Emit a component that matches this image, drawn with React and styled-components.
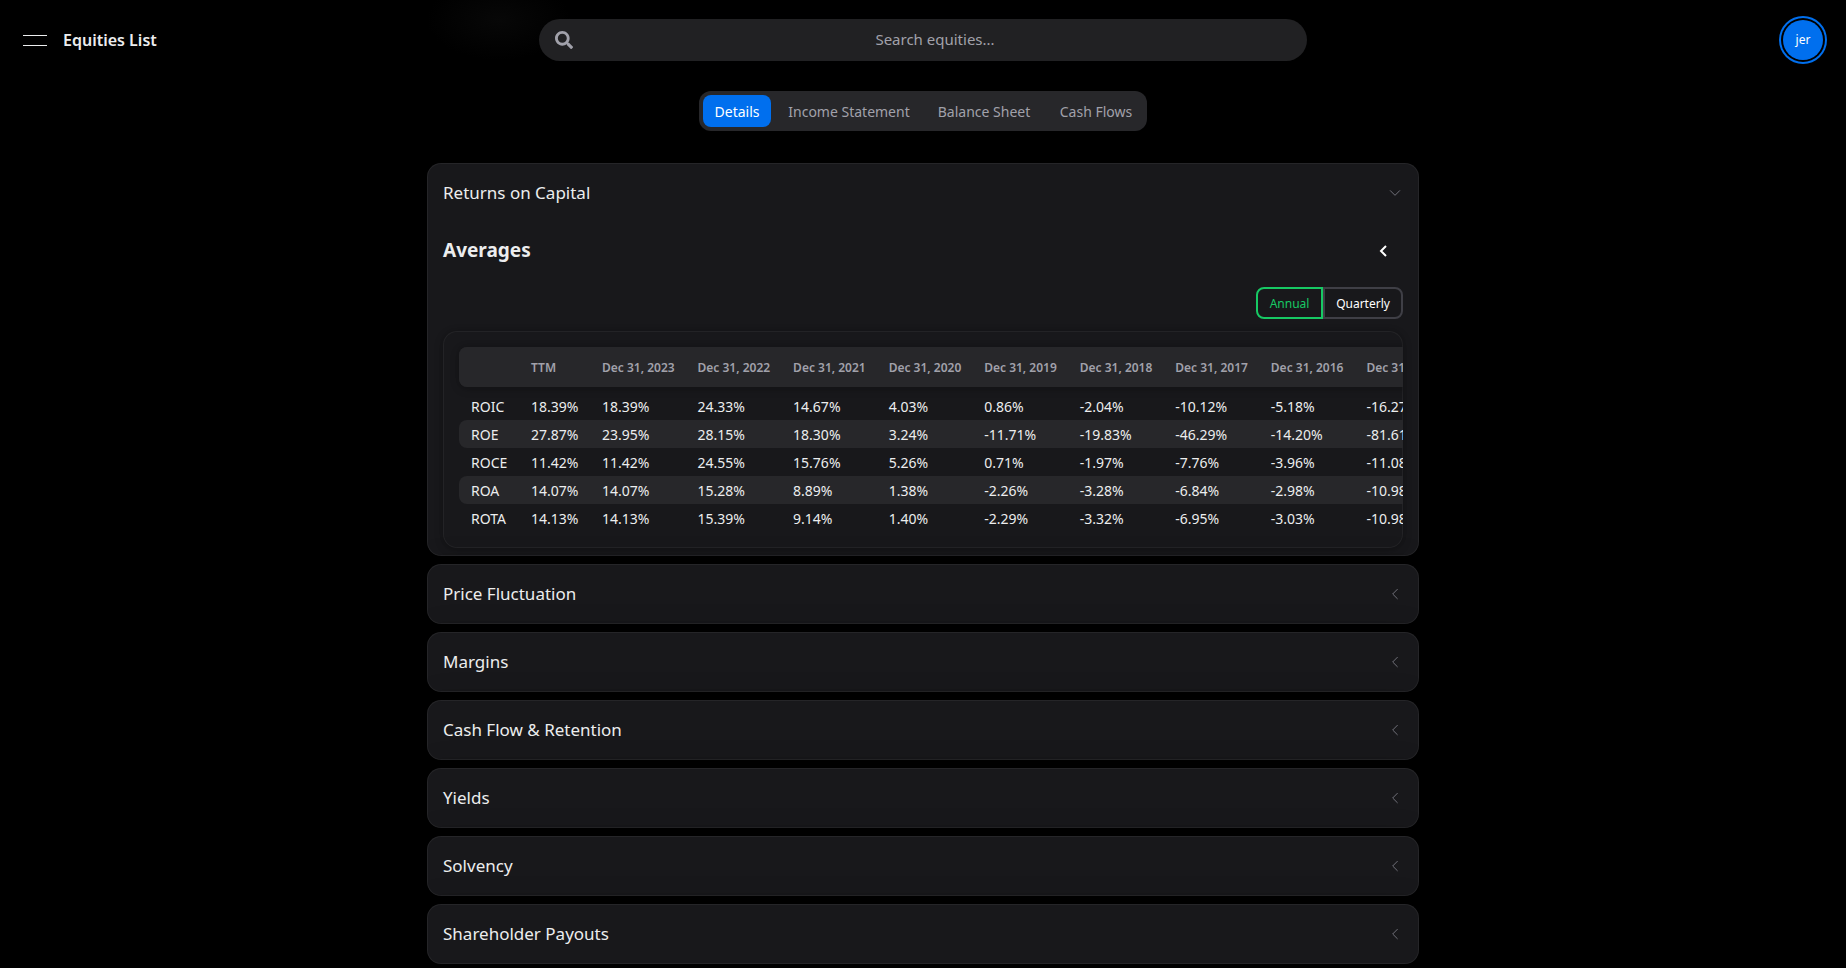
import React, { useState } from 'react';
import styled, { createGlobalStyle } from 'styled-components';
import { FaSearch } from 'react-icons/fa';

const Colors = {
  black: '#000',
  white: '#fff',
  text: '#ecedee',
  muted: '#a1a1aa',
  icon: '#71717a',
  card: '#18181b',
  raised: '#27272a',
  search: '#212123',
  line: '#3f3f46',
  blue: '#006fee',
  green: '#17c964',
};

const Shadows = {
  small: '0 0 5px rgba(0, 0, 0, .05), 0 2px 10px rgba(0, 0, 0, .2), inset 0 0 0 1px rgba(255, 255, 255, .05)',
  medium: '0 0 15px rgba(0, 0, 0, .06), 0 2px 30px rgba(0, 0, 0, .22), inset 0 0 0 1px rgba(255, 255, 255, .06)',
};

const GlobalStyle = createGlobalStyle`
  * {
    box-sizing: border-box;
  }
  body {
    margin: 0;
    background: ${Colors.black};
    color: ${Colors.text};
    font-family: "Noto Sans", "Open Sans", sans-serif;
    font-size: 14px;
    line-height: 20px;
  }
  button, input {
    font: inherit;
    color: inherit;
    border: 0;
    margin: 0;
    padding: 0;
    background: none;
  }
  button {
    cursor: pointer;
  }
`;

const Header = styled.header`
  display: grid;
  grid-template-columns: 1fr minmax(0, 768px) 1fr;
  align-items: center;
  height: 80px;
  padding: 0 23px;
  background: radial-gradient(ellipse 72px 40px at calc(50% - 424px) 20px, #070707, transparent);
`;

const Brand = styled.div`
  display: flex;
  align-items: center;
  gap: 16px;
`;

const MenuButton = styled.button`
  display: flex;
  flex-direction: column;
  justify-content: center;
  gap: 9px;
  width: 24px;
  height: 40px;
`;

const MenuLine = styled.span`
  height: 1px;
  background: ${Colors.text};
`;

const BrandLink = styled.a`
  color: inherit;
  font-size: 16px;
  font-weight: 600;
  text-decoration: none;
  white-space: nowrap;
`;

const SearchBar = styled.label`
  display: flex;
  align-items: center;
  gap: 6px;
  height: 42px;
  padding: 0 16px;
  border-radius: 21px;
  background: ${Colors.search};
  color: ${Colors.muted};
`;

const SearchInput = styled.input`
  flex: 1;
  min-width: 0;
  height: 100%;
  padding-bottom: 2px;
  font-size: 15px;
  text-align: center;
  outline: none;
  &::placeholder {
    color: ${Colors.muted};
    opacity: 1;
  }
`;

const Avatar = styled.button`
  justify-self: end;
  width: 40px;
  height: 40px;
  border-radius: 50%;
  background: ${Colors.blue};
  box-shadow: 0 0 0 2px ${Colors.black}, 0 0 0 4px ${Colors.blue};
  color: ${Colors.white};
  font-size: 12px;
`;

const Main = styled.main`
  display: flex;
  flex-direction: column;
  align-items: center;
  gap: 32px;
  max-width: 1024px;
  margin: 0 auto;
  padding: 11px 16px 4px;
`;

const TabList = styled.div`
  display: grid;
  grid-template-columns: 68px 140px 114px 94px;
  gap: 8px;
  padding: 4px;
  border-radius: 12px;
  background: ${Colors.raised};
`;

const Tab = styled.button`
  height: 32px;
  padding-top: 2px;
  border-radius: 8px;
  white-space: nowrap;
  color: ${props => (props.$selected ? Colors.white : Colors.muted)};
  ${props => props.$selected && `
    background: ${Colors.blue};
  `}
`;

const Accordion = styled.div`
  display: flex;
  flex-direction: column;
  gap: 8px;
  width: 100%;
`;

const Card = styled.section`
  padding: 0 16px;
  border-radius: 14px;
  background: ${Colors.card};
  box-shadow: ${Shadows.medium};
`;

const CardTitle = styled.h2`
  margin: 0;
  font-weight: 400;
`;

const CardToggle = styled.button`
  display: flex;
  align-items: center;
  justify-content: space-between;
  width: 100%;
  height: 60px;
  font-size: 17px;
`;

const Indicator = styled.svg`
  width: 16px;
  height: 16px;
  fill: none;
  stroke: ${Colors.icon};
  stroke-width: 1.5;
  stroke-linecap: round;
  stroke-linejoin: round;
  transform: rotate(${props => (props.$open ? '-90deg' : '0deg')});
`;

const CardBody = styled.div`
  padding-bottom: 8px;
`;

const AveragesRow = styled.div`
  display: flex;
  align-items: center;
  justify-content: space-between;
  height: 56px;
`;

const AveragesTitle = styled.h3`
  margin: 0;
  padding-bottom: 2px;
  font-size: 19px;
  font-weight: 700;
`;

const IconButton = styled.button`
  display: flex;
  align-items: center;
  justify-content: center;
  width: 40px;
  height: 40px;
  svg {
    fill: none;
    stroke: ${Colors.white};
    stroke-width: 2;
  }
`;

const PeriodGroup = styled.div`
  display: flex;
  justify-content: flex-end;
  margin: 8px 0 12px;
`;

const PeriodButton = styled.button`
  width: ${props => props.$width}px;
  height: 32px;
  padding-top: 2px;
  border: 2px solid ${props => (props.$selected ? Colors.green : Colors.line)};
  color: ${props => (props.$selected ? Colors.green : Colors.white)};
  font-size: 12px;
  &:first-child {
    border-radius: 8px 0 0 8px;
  }
  &:last-child {
    border-radius: 0 8px 8px 0;
  }
`;

const TableCard = styled.div`
  padding: 16px;
  border-radius: 14px;
  box-shadow: ${Shadows.small};
  overflow-x: auto;
  scrollbar-width: none;
`;

const Table = styled.table`
  width: 991px;
  table-layout: fixed;
  border-collapse: separate;
  border-spacing: 0;
  text-align: left;
  white-space: nowrap;
`;

const Column = styled.col`
  width: ${props => props.$width}px;
`;

const TableHead = styled.thead`
  th {
    height: 40px;
    padding: 2px 12px 0;
    background: ${Colors.raised};
    color: ${Colors.muted};
    font-size: 12px;
    font-weight: 600;
  }
  th:first-child {
    border-radius: 8px 0 0 8px;
  }
  th:last-child {
    border-radius: 0 8px 8px 0;
  }
  tr {
    border-radius: 8px;
    box-shadow: ${Shadows.small};
  }
`;

const TableBody = styled.tbody`
  &::before {
    content: "";
    display: block;
    height: 5px;
  }
`;

const Row = styled.tr`
  th, td {
    height: 28px;
    padding: 2px 12px 0;
    font-weight: 400;
  }
  &:nth-child(even) > * {
    background: ${Colors.raised};
  }
  > :first-child {
    border-radius: 8px 0 0 8px;
  }
  > :last-child {
    border-radius: 0 8px 8px 0;
  }
`;

const tabs = ['Details', 'Income Statement', 'Balance Sheet', 'Cash Flows'];

const periods = [
  { name: 'Annual', width: 67 },
  { name: 'Quarterly', width: 80 },
];

const sections = [
  'Returns on Capital',
  'Price Fluctuation',
  'Margins',
  'Cash Flow & Retention',
  'Yields',
  'Solvency',
  'Shareholder Payouts',
];

const years = [2023, 2022, 2021, 2020, 2019, 2018, 2017, 2016, 2015];

const returns = [
  { name: 'ROIC', values: ['18.39%', '18.39%', '24.33%', '14.67%', '4.03%', '0.86%', '-2.04%', '-10.12%', '-5.18%', '-16.27%'] },
  { name: 'ROE', values: ['27.87%', '23.95%', '28.15%', '18.30%', '3.24%', '-11.71%', '-19.83%', '-46.29%', '-14.20%', '-81.61%'] },
  { name: 'ROCE', values: ['11.42%', '11.42%', '24.55%', '15.76%', '5.26%', '0.71%', '-1.97%', '-7.76%', '-3.96%', '-11.08%'] },
  { name: 'ROA', values: ['14.07%', '14.07%', '15.28%', '8.89%', '1.38%', '-2.26%', '-3.28%', '-6.84%', '-2.98%', '-10.98%'] },
  { name: 'ROTA', values: ['14.13%', '14.13%', '15.39%', '9.14%', '1.40%', '-2.29%', '-3.32%', '-6.95%', '-3.03%', '-10.98%'] },
];

const ReturnsTable = () => (
  <TableCard>
    <Table>
      <colgroup>
        <Column $width={60} />
        <Column $width={71} />
      </colgroup>
      <TableHead>
        <tr>
          <th aria-label="Ratio" />
          <th scope="col">TTM</th>
          {years.map(year => <th scope="col" key={year}>Dec 31, {year}</th>)}
        </tr>
      </TableHead>
      <TableBody>
        {returns.map(row => (
          <Row key={row.name}>
            <th scope="row">{row.name}</th>
            {row.values.map((value, i) => <td key={i}>{value}</td>)}
          </Row>
        ))}
      </TableBody>
    </Table>
  </TableCard>
);

const Returns = () => {
  const [period, setPeriod] = useState('Annual');
  return (
    <CardBody>
      <AveragesRow>
        <AveragesTitle>Averages</AveragesTitle>
        <IconButton aria-label="Show averages">
          <svg width="12" height="14" viewBox="0 0 12 14">
            <path d="M9 2 4 7l5 5" />
          </svg>
        </IconButton>
      </AveragesRow>
      <PeriodGroup>
        {periods.map(({ name, width }) => (
          <PeriodButton
            key={name}
            $width={width}
            $selected={name === period}
            onClick={() => setPeriod(name)}
          >
            {name}
          </PeriodButton>
        ))}
      </PeriodGroup>
      <ReturnsTable />
    </CardBody>
  );
};

const Section = (props) => (
  <Card>
    <CardTitle>
      <CardToggle aria-expanded={props.open} onClick={props.onClick}>
        {props.title}
        <Indicator viewBox="0 0 24 24" $open={props.open} aria-hidden="true">
          <path d="M15.5 19l-7-7 7-7" />
        </Indicator>
      </CardToggle>
    </CardTitle>
    {props.open && props.children}
  </Card>
);

const App = () => {
  const [tab, setTab] = useState('Details');
  const [open, setOpen] = useState('Returns on Capital');
  return (
    <>
      <GlobalStyle />
      <Header>
        <Brand>
          <MenuButton aria-label="Open menu">
            <MenuLine />
            <MenuLine />
          </MenuButton>
          <BrandLink href="#equities">Equities List</BrandLink>
        </Brand>
        <SearchBar>
          <FaSearch size={18} />
          <SearchInput type="text" placeholder="Search equities..." aria-label="Search equities" />
        </SearchBar>
        <Avatar>jer</Avatar>
      </Header>
      <Main>
        <TabList role="tablist">
          {tabs.map(name => (
            <Tab
              key={name}
              role="tab"
              aria-selected={name === tab}
              $selected={name === tab}
              onClick={() => setTab(name)}
            >
              {name}
            </Tab>
          ))}
        </TabList>
        <Accordion>
          {sections.map(title => (
            <Section
              key={title}
              title={title}
              open={title === open}
              onClick={() => setOpen(title === open ? null : title)}
            >
              {title === 'Returns on Capital' && <Returns />}
            </Section>
          ))}
        </Accordion>
      </Main>
    </>
  );
};

export default App;
